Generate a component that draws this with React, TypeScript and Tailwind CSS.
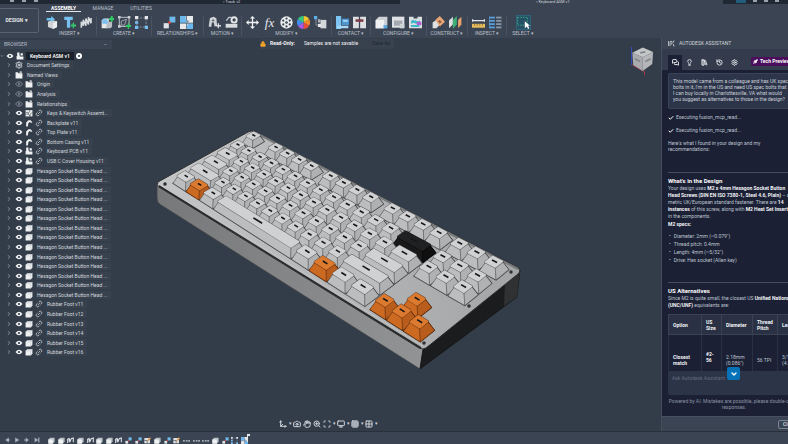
import React from "react";
import {
  ChevronRight,
  ChevronDown,
  Link2,
  Settings,
  Check,
  Lock,
  MessagesSquare,
  Lightbulb,
  LibraryBig,
  History,
  Rocket,
  Move3d,
  Camera,
  Hand,
  ZoomIn,
  Scan,
  Monitor,
  Grid3x3,
  Grid2x2,
} from "lucide-react";

/* ---------- toolbar ---------- */

const icons: Record<string, React.ReactNode> = {
  insert: (
    <>
      <path d="M3 9l6-3 8 2v9l-6 3-8-3z" fill="#cfd3d6" />
      <path d="M11 11l6-3v9l-6 3z" fill="#eceeef" />
      <path d="M1 3h7V0l6 5-6 4V7H1z" fill="#6cc0ef" />
    </>
  ),
  bolt: (
    <>
      <path d="M2 1h13v5h-4v12H6V6H2z" fill="#76bfee" />
      <path d="M12 13h3v-3h2v3h3v3h-3v3h-2v-3h-3z" fill="#35c86a" />
    </>
  ),
  spring: <path d="M2 18V9l3 6V6l4 9V4l4 9V2l4 9V3" fill="none" stroke="#d9dcdf" strokeWidth="2.4" />,
  component: (
    <>
      <path d="M1 7l3-3h8v12l-2 3H1z" fill="#e5e7e9" />
      <path d="M9 9h8v7l-2 3H8z" fill="#b9bec4" />
      <path d="M2 5h8v7H2z" fill="#7abff0" />
      <path d="M12 3h3V0h3v3h3v3h-3v3h-3V6h-3z" fill="#30c964" />
    </>
  ),
  sketch: (
    <>
      <path d="M2 2h15v14H2z" fill="none" stroke="#c9cdd2" strokeWidth="1.4" />
      <path d="M5 14V8l8-3-3 9z" fill="none" stroke="#aab0b8" strokeWidth="1.4" />
      <path d="M0 0h4v4H0zM15 0h4v4h-4zM0 14h4v4H0z" fill="#c9cdd2" />
      <path d="M12 14h3v-3h2v3h3v3h-3v3h-2v-3h-3z" fill="#30c964" />
    </>
  ),
  pattern: (
    <>
      <path d="M3 3h14v14H3z" fill="none" stroke="#9aa3ae" strokeWidth="1.2" strokeDasharray="3 2" />
      <path d="M0 0h5v5H0zM15 0h5v5h-5z" fill="#e4e6e8" />
      <path d="M0 8h5v4H0zM0 15h5v5H0zM15 15h5v5h-5z" fill="#76bfee" />
    </>
  ),
  joint: (
    <>
      <path d="M10 1h9v9h-9z" fill="#6fb9ea" />
      <path d="M1 11h8v8H1z" fill="#dfe1e4" />
      <circle cx="10" cy="10" r="2" fill="#e0483e" />
    </>
  ),
  puzzle: (
    <>
      <path d="M0 0h20v20H0z" fill="#e6e8ea" />
      <path d="M0 0h9v6l3 2-3 3H0zM11 11h9v9h-9l-1-4 2-2z" fill="#6cb8ec" />
      <path d="M10 0v7l3 1-3 3v9M0 11h20" fill="none" stroke="#3b4453" />
    </>
  ),
  motion: (
    <>
      <path d="M1 16l2-13 6-2 4 3 1 11-4 1-1-6H6l-1 7z" fill="#cfd3d6" />
      <path d="M6 6l3-1 1 3H6z" fill="#5b6472" />
      <path d="M12 15h8M16 11v8" stroke="#d9dcdf" strokeWidth="2" />
    </>
  ),
  motionLink: (
    <>
      <circle cx="14" cy="6" r="4" fill="none" stroke="#e4e6e8" strokeWidth="3" />
      <path d="M1 12h18v6H1z" fill="#d9dcdf" />
      <path d="M2 7l4-5h4" fill="none" stroke="#c4c9cf" strokeWidth="2" />
    </>
  ),
  move: (
    <path
      d="M10 0l4 4h-3v5h5V6l4 4-4 4v-3h-5v5h3l-4 4-4-4h3v-5H4v3l-4-4 4-4v3h5V4H6z"
      fill="#f0f1f2"
    />
  ),
  ball: (
    <>
      <circle cx="10" cy="10" r="9.5" fill="#eceeef" />
      <g fill="#3b4453">
        <circle cx="10" cy="10" r="2" />
        <circle cx="10" cy="4" r="1.7" />
        <circle cx="10" cy="16" r="1.7" />
        <circle cx="5" cy="7" r="1.7" />
        <circle cx="15" cy="7" r="1.7" />
        <circle cx="5" cy="13" r="1.7" />
        <circle cx="15" cy="13" r="1.7" />
      </g>
    </>
  ),
  colors: (
    <>
      <path d="M10 10V0A10 10 0 0 1 18.700 5z" fill="#f0c52e" />
      <path d="M10 10l8.700-5A10 10 0 0 1 18.700 15z" fill="#f28a2c" />
      <path d="M10 10l8.700 5A10 10 0 0 1 10 20z" fill="#ea4c3c" />
      <path d="M10 10v10A10 10 0 0 1 1.300 15z" fill="#a45be0" />
      <path d="M10 10L1.300 15A10 10 0 0 1 1.300 5z" fill="#3e8ef0" />
      <path d="M10 10L1.300 5A10 10 0 0 1 10 0z" fill="#35c87d" />
    </>
  ),
  derive: (
    <>
      <path d="M10 6h9v13h-9z" fill="#d5d8db" />
      <path d="M6 5h4v5H6z" fill="#aeb4bb" />
      <path d="M3 4v10h6" fill="none" stroke="#aeb4bb" />
      <path d="M0 0h5v5H0z" fill="#5db1ea" />
      <path d="M6 12h5v5H6z" fill="#e4e6e8" />
    </>
  ),
  contact: (
    <>
      <path d="M0 0h8v20H0z" fill="#7cc4f2" />
      <path d="M9 4h11v10H9z" fill="#4e96cf" />
      <path d="M11 6h7v3h-7zM2 15h17v4H2z" fill="#a8d9f8" />
    </>
  ),
  contactSet: (
    <>
      <path d="M0 1h9v18H0zM11 1h9v18h-9z" fill="#dddfe1" />
      <path d="M4 5h12v4H4z" fill="#7b3e48" />
    </>
  ),
  box: (
    <>
      <path d="M1 6l5-5h13v12l-5 6H1z" fill="#cdd1d5" />
      <path d="M1 6h13v13H1z" fill="#eff0f1" />
      <path d="M13 14h6v5h-6z" fill="#5da8dc" />
    </>
  ),
  body: (
    <>
      <path d="M1 7l5-5h13v11l-5 6H1z" fill="#b9bfc6" />
      <path d="M1 7h13v12H1z" fill="#eff0f1" />
    </>
  ),
  table: (
    <>
      <path d="M0 1h19v17H0z" fill="#dfe1e4" />
      <path d="M3 7h13v8H3z" fill="#a2a9b1" />
      <path d="M12 12h7v7h-7z" fill="#cfd3d6" />
    </>
  ),
  configPart: (
    <>
      <path d="M0 1h7v3h6V1h7v18H0z" fill="#dcdfe2" />
      <path d="M3 8c6-5 8 3 14-1v4c-6 4-8-3-14 1zM3 14h13v3H3z" fill="#3fb9c9" />
      <path d="M12 9h7v5h-7z" fill="#b05fd0" />
    </>
  ),
  plane: (
    <>
      <path d="M1 10l7-5 5 7-6 7H1z" fill="#dddfe1" />
      <path d="M5 6l7-6 8 9-8 7z" fill="#e9a777" />
      <path d="M9 8l3-2 3 3-3 3z" fill="#8d5f43" />
    </>
  ),
  midplane: (
    <>
      <path d="M0 7l6-6v12l-6 6z" fill="#dddfe1" />
      <path d="M6 6l6-6v13l-6 7z" fill="#3fae74" />
      <path d="M14 6l5-5v12l-5 6z" fill="#eaa56f" />
    </>
  ),
  measure: (
    <>
      <path d="M1 5v4M19 5v4M1 7h18" fill="none" stroke="#e4e6e8" strokeWidth="2" />
      <path d="M0 12h20v6H0z" fill="#e8bd5b" />
      <path d="M4 12v3M8 12v3M12 12v3M16 12v3" stroke="#6c5a2c" />
    </>
  ),
  interference: (
    <>
      <path d="M0 1h9v18H0z" fill="#5f9ed4" />
      <path d="M11 1h8v18h-8z" fill="#8d98a6" />
      <path d="M1 5h18M1 10h18M1 15h18" stroke="#36465a" strokeWidth="2" />
    </>
  ),
  select: (
    <>
      <path d="M1 2h15v12H1z" fill="none" stroke="#3db58a" strokeWidth="1.5" strokeDasharray="2 2" />
      <path d="M12 8v11l3-3 2 4 2-1-2-4h3z" fill="#fff" />
    </>
  ),
};

const groups = [
  { label: "INSERT", width: "w-[54px]", items: ["insert", "bolt", "spring"] },
  { label: "CREATE", width: "w-[55px]", items: ["component", "sketch", "pattern"] },
  { label: "RELATIONSHIPS", width: "w-[52px]", items: ["joint", "puzzle"] },
  { label: "MOTION", width: "w-[38px]", items: ["motion", "motionLink"] },
  { label: "MODIFY", width: "w-[90px]", items: ["move", "fx", "ball", "colors", "derive"] },
  { label: "CONTACT", width: "w-[39px]", items: ["contact", "contactSet"] },
  { label: "CONFIGURE", width: "w-[56px]", items: ["box", "table", "configPart"] },
  { label: "CONSTRUCT", width: "w-[41px]", items: ["plane", "midplane"] },
  { label: "INSPECT", width: "w-[39px]", items: ["measure", "interference"] },
  { label: "SELECT", width: "w-[32px]", items: ["select"] },
];

function ToolIcon({ name }: { name: string }) {
  if (name === "fx") {
    return (
      <span className="w-[13px] text-center font-['Liberation_Serif',serif] text-[13px] leading-[13px] italic text-gray-200">
        fx
      </span>
    );
  }
  return (
    <svg viewBox="0 0 20 20" className="size-[13px]">
      {icons[name]}
    </svg>
  );
}

function TopBar() {
  return (
    <header className="shrink-0">
      <div className="flex h-1 justify-between bg-[#202834] text-[4px] leading-[4px] text-gray-300">
        <div className="flex flex-1 items-start">
          <span className="ml-[10px] flex w-[213px] gap-2">
            <i className="h-[2px] w-1 bg-gray-400" />
            <i className="h-[2px] w-1 bg-gray-400" />
            <i className="h-[2px] w-1 bg-gray-400" />
          </span>
          <span>▫ Track v2</span>
        </div>
        <div className="flex w-[388px] justify-between bg-[#3b4453]">
          <span className="ml-[136px]">▫ Keyboard ASM v1</span>
          <span className="flex w-[65px] gap-[7px] bg-[#202834] pl-[13px]">
            <i className="h-[3px] w-[10px] bg-[#215c7d]" />
            <i className="h-[2px] w-1 bg-gray-400" />
            <i className="h-[2px] w-1 bg-gray-400" />
            <i className="h-[2px] w-1 bg-gray-400" />
          </span>
        </div>
      </div>
      <div className="flex h-[34px] bg-[#3b4453]">
        <button className="-ml-px mt-1 h-[25px] w-10 shrink-0 rounded-xs border border-[#596271] pr-1 text-[5px] font-bold text-gray-200">
          DESIGN <span className="ml-px">▾</span>
        </button>
        <div className="ml-1 flex flex-col">
          <nav className="flex h-2 text-[5px] leading-[8px] text-[#b9c0c9]">
            <button className="ml-[3px] w-[35px] border-b border-gray-200 font-bold text-white">ASSEMBLY</button>
            <button className="ml-2 w-7">MANAGE</button>
            <button className="ml-2 w-8">UTILITIES</button>
          </nav>
          <div className="flex pt-1">
            {groups.map((group) => (
              <div key={group.label} className={`flex flex-col items-center ${group.width} border-r border-[#4a5362] last:border-0`}>
                <div className={`flex gap-1 ${group.label === "SELECT" ? "bg-[#265064] outline outline-[#2d6478]" : ""}`}>
                  {group.items.map((item) => (
                    <button key={item} aria-label={item} className="flex h-[13px] items-center">
                      <ToolIcon name={item} />
                    </button>
                  ))}
                </div>
                <button className="mt-px text-[5px] leading-[6px] whitespace-nowrap text-[#bcc2ca]">{group.label} ▾</button>
              </div>
            ))}
          </div>
        </div>
      </div>
    </header>
  );
}

/* ---------- browser tree ---------- */

type Node = { name: string; icon: string; linked?: boolean; hidden?: boolean };

const nodes: Node[] = [
  { name: "Origin", icon: "folder", hidden: true },
  { name: "Analysis", icon: "folder", hidden: true },
  { name: "Relationships", icon: "folder", hidden: true },
  { name: "Keys & Keyswitch Assemt...", icon: "config", linked: true },
  { name: "Backplate v11", icon: "sheet", linked: true },
  { name: "Top Plate v11", icon: "sheet", linked: true },
  { name: "Bottom Casing v11", icon: "sheet", linked: true },
  { name: "Keyboard PCB v11", icon: "assembly", linked: true },
  { name: "USB C Cover Housing v11", icon: "assembly", linked: true },
  ...Array.from({ length: 14 }, () => ({ name: "Hexagon Socket Button Head ...", icon: "body" })),
  ...[1, 2, 3, 4, 5, 6].map((n) => ({ name: `Rubber Foot v1${n}`, icon: "body", linked: true })),
];

function NodeIcon({ type }: { type: string }) {
  return (
    <svg viewBox="0 0 14 14" className="size-2 shrink-0" fill="#eef0f2">
      {type === "folder" && <path d="M1 2h4l1 2h7v9H1zM8 1h4v2H8z" />}
      {type === "body" && (
        <>
          <path d="M1 5l3-3h9v8l-3 3H1z" />
          <path d="M1 5h9v8M10 5l3-3" fill="none" stroke="#c2c7cd" />
        </>
      )}
      {type === "assembly" && <path d="M2 1h4v5h1v2h6v5H1V7h1zM8 2h4v4H8z" />}
      {type === "sheet" && <path d="M2 13V6l4-4h4l3 4-3 1-1-2-3 2-1 6z" />}
      {type === "config" && (
        <>
          <path d="M1 2h12v11H1z" />
          <path d="M1 6h5v3H1M8 2v4M6 9l3 4V9l4-3" fill="none" stroke="#333d49" />
        </>
      )}
    </svg>
  );
}

function EyeIcon({ hidden }: { hidden?: boolean }) {
  return (
    <svg viewBox="0 0 16 16" className="size-2 shrink-0">
      <path
        d="M1 8q7-9 14 0-7 9-14 0z"
        fill={hidden ? "none" : "#f0f2f4"}
        stroke={hidden ? "#7f8894" : "none"}
        strokeWidth="2"
      />
      <circle cx="8" cy="8" r="2.200" fill={hidden ? "#7f8894" : "#333d49"} />
    </svg>
  );
}

const nameClass = "ml-px bg-[#38424f] pl-px pr-1 whitespace-nowrap leading-[8px]";

function BrowserTree() {
  return (
    <aside className="w-[112px] shrink-0 pt-[2px] text-[5px] text-[#d3d7dc]">
      <div className="flex h-[9px] items-center justify-between bg-[#3b4453] px-1 text-[#b4bac3]">
        <span>BROWSER</span>
        <button aria-label="Collapse" className="px-px">–</button>
      </div>
      <ul className="mt-[2px] grid h-[306px] auto-rows-fr">
        <li className="flex items-center gap-[2px] text-white">
          <ChevronDown className="size-1" />
          <EyeIcon />
          <NodeIcon type="assembly" />
          <span className="bg-[#1c222b] px-1 leading-[8px] font-semibold whitespace-nowrap">Keyboard ASM v1</span>
          <input type="radio" name="active" aria-label="Active component" defaultChecked className="size-[6px] appearance-none rounded-full border-2 border-white bg-[#333d49]" />
        </li>
        <li className="flex items-center gap-[2px] pl-[5px]">
          <ChevronRight className="size-2 p-px" />
          <Settings className="size-2" strokeWidth={3} />
          <span className={nameClass}>Document Settings</span>
        </li>
        <li className="flex items-center gap-[2px] pl-[5px]">
          <ChevronRight className="size-2 p-px" />
          <NodeIcon type="folder" />
          <span className={nameClass}>Named Views</span>
        </li>
        {nodes.map((node, i) => (
          <li key={i} className="flex items-center gap-[2px] pl-[5px]">
            <button aria-label="Expand">
              <ChevronRight className="size-2 p-px" />
            </button>
            <button aria-label="Toggle visibility">
              <EyeIcon hidden={node.hidden} />
            </button>
            <NodeIcon type={node.icon} />
            {node.linked && <Link2 className="size-2 shrink-0 -rotate-45" strokeWidth={2} />}
            <span className={nameClass}>{node.name}</span>
          </li>
        ))}
      </ul>
    </aside>
  );
}

/* ---------- keyboard model ---------- */

type Key = { u: number; v: number; w: number; color?: "orange" | "black" };

// widths in key units, negative numbers are gaps
const rows: { v: number; widths: number[] }[] = [
  { v: 5.25, widths: [1, -1, 1, 1, 1, 1, -0.5, 1, 1, 1, 1, -0.5, 1, 1, 1, 1, -0.25, 1, 1, 1] },
  { v: 4, widths: [1, 1, 1, 1, 1, 1, 1, 1, 1, 1, 1, 1, 1, 2, -0.25, 1, 1, 1] },
  { v: 3, widths: [1.5, 1, 1, 1, 1, 1, 1, 1, 1, 1, 1, 1, 1, 1.5, -0.25, 1, 1, 1] },
  { v: 2, widths: [1.75, 1, 1, 1, 1, 1, 1, 1, 1, 1, 1, 1, 2.25] },
  { v: 1, widths: [2.25, 1, 1, 1, 1, 1, 1, 1, 1, 1, 1, 2.75, -1.25, 1] },
  { v: 0, widths: [1.25, 1.25, 1.25, 6.25, 1.25, 1.25, 1.25, 1.25, -0.25, 1, 1, 1] },
];

const keys: Key[] = rows.flatMap(({ v, widths }) => {
  let u = 0;
  const out: Key[] = [];
  widths.forEach((w) => {
    if (w > 0) {
      const arrow = v < 2 && u > 15;
      const orange = arrow || (v === 0 && (u === 1.25 || u === 11.25));
      out.push({ u, v, w, color: orange ? "orange" : v === 4 && w === 2 ? "black" : undefined });
    }
    u += Math.abs(w);
  });
  return out;
});

// perspective projection of a point on the key plane, z lifts it off the plate
function project(u: number, v: number, z = 0): [number, number] {
  const s = (u - 0.56) / 17.19;
  const t = v / 5.25;
  const w = 1 - 0.233 * s + 0.0478 * t;
  return [(185 + 136.4 * s + 81.1 * t) / w, (177 + 70.7 * s - 33.5 * t - z) / w];
}

const points = (list: [number, number][]) => list.map((p) => p.map((n) => n.toFixed(1)).join(",")).join(" ");

const palette = {
  plain: { top: "#d0d1d2", front: "#bcbdbe", side: "#b0b1b2", line: "#3c3d3e" },
  orange: { top: "#dc7a30", front: "#cc6a22", side: "#b95d1c", line: "#4b240c" },
  black: { top: "#202122", front: "#19191a", side: "#101011", line: "#060606" },
};

function KeyCap({ u, v, w, color }: Key) {
  const c = palette[color ?? "plain"];
  const a = 0.24;
  const b = 0.03;
  const top = [
    project(u + a, v - 0.5 + a, 1),
    project(u + w - a, v - 0.5 + a, 1),
    project(u + w - a, v + 0.5 - a, 1),
    project(u + a, v + 0.5 - a, 1),
  ];
  const base = [
    project(u + b, v - 0.5 + b, -6),
    project(u + w - b, v - 0.5 + b, -6),
    project(u + w - b, v + 0.5 - b, -6),
    project(u + b, v + 0.5 - b, -6),
  ];
  const mid = u + w / 2;
  const [x1, y1] = project(mid - 0.14 * w ** 0.5, v + 0.04, 1);
  const [x2, y2] = project(mid + 0.14 * w ** 0.5, v + 0.04, 1);
  return (
    <g stroke={c.line} strokeWidth="0.4" strokeLinejoin="round">
      <polygon points={points([base[0], base[1], base[2], top[2], top[3], base[3]])} fill={c.side} strokeWidth="1.1" />
      <polygon points={points([base[3], base[0], top[0], top[3]])} fill={c.front} />
      <polygon points={points([base[0], base[1], top[1], top[0]])} fill={c.front} />
      <polygon points={points([base[1], base[2], top[2], top[1]])} fill={c.side} />
      <polygon points={points(top)} fill={c.top} strokeWidth="2.8" strokeOpacity="0.7" />
      <polygon points={points(top)} fill={c.top} stroke={c.top} strokeWidth="1.8" />
      <line x1={x1} y1={y1} x2={x2} y2={y2} stroke="#161616" strokeWidth="1.6" />
    </g>
  );
}

function KeyboardModel() {
  return (
    <svg viewBox="150 125 380 250" className="w-[380px]" role="img" aria-label="Keyboard assembly">
      <defs>
        <linearGradient id="front" x1="0" y1="0" x2="1" y2="0">
          <stop offset="0" stopColor="#777879" />
          <stop offset="1" stopColor="#929394" />
        </linearGradient>
        <linearGradient id="plate" x1="0" y1="0" x2="1" y2="0">
          <stop offset="0" stopColor="#c4c5c6" />
          <stop offset="1" stopColor="#a3a5a6" />
        </linearGradient>
      </defs>
      <path d="M157 185L423 349L420 369L161 205Q157 203 157 198z" fill="url(#front)" stroke="#3f4042" strokeWidth="0.7" />
      <path d="M423 350L520 270L517 297L420 369z" fill="#1b1c1d" stroke="#111" strokeWidth="0.7" />
      <path d="M505 283L520 270L517 297L504 306z" fill="#303133" />
      <path d="M158 182L248 132Q251 130 255 132L517 267Q522 270 518 274L426 348Q423 350 419 348L159 187Q156 185 158 182z" fill="url(#plate)" stroke="#2c2d2e" strokeWidth="1" />
      <path d="M159 186L421 348" stroke="#252627" strokeWidth="1.5" />
      <path d="M160 184L423 346" stroke="#c3c4c4" strokeWidth="1" />
      <path d="M256 133L518 269" stroke="#77797b" strokeWidth="2" />
      {[[165, 184], [511, 272], [469, 306], [424, 343]].map(([x, y]) => (
        <circle key={x} cx={x} cy={y} r="1.500" fill="#1d1d1e" stroke="#606162" />
      ))}
      {keys.map((key, i) => (
        <KeyCap key={i} {...key} />
      ))}
    </svg>
  );
}

function ViewCube() {
  return (
    <svg viewBox="0 0 30 36" className="absolute top-[7px] right-[7px] w-[26px]" role="img" aria-label="View cube">
      <path d="M4 2v21" stroke="#3c4bd0" />
      <path d="M5 23l14 8v4" fill="none" stroke="#b83a48" />
      <path d="M17 3l12 5-12 6L5 9z" fill="#c4c6c8" />
      <path d="M5 9l12 5v16L6 23z" fill="#a9abae" />
      <path d="M17 14l12-6-1 14-11 8z" fill="#b4b6b9" />
      <path d="M14 9l6-1M8 16l6 3M20 19l6-3" stroke="#84878c" strokeWidth="2" />
    </svg>
  );
}

function Viewport() {
  const nav = [Move3d, Camera, Hand, ZoomIn, Scan, Monitor, Grid3x3, Grid2x2];
  return (
    <main className="relative flex min-w-0 flex-1 overflow-hidden bg-[#333d49]">
      <BrowserTree />
      <div className="flex min-w-0 flex-1 flex-col">
        <div className="mt-px ml-[148px] flex h-[10px] w-[134px] items-center bg-[#38414e] text-[5px] whitespace-nowrap text-gray-100">
          <Lock className="size-[6px] fill-[#f0a52c] text-[#f0a52c]" />
          <strong className="ml-1">Read-Only:</strong>
          <span className="ml-[9px]">Samples are not savable</span>
          <button disabled className="ml-auto pr-1 text-[#1e2630]">Save As</button>
        </div>
        <div className="mt-[76px] ml-[38px]">
          <KeyboardModel />
        </div>
        <div className="mt-auto mb-[3px] ml-[166px] flex items-center text-[5px] text-gray-300">
          {nav.map((Icon, i) => (
            <button key={i} aria-label={`Navigation ${i + 1}`} className="flex items-center">
              <Icon className="mx-px size-[8px]" strokeWidth={3} />
              {i !== 1 && i !== 2 && i !== 3 ? <span className="w-1">▾</span> : null}
            </button>
          ))}
        </div>
      </div>
      <ViewCube />
    </main>
  );
}

/* ---------- assistant ---------- */

function Assistant() {
  const tabs = [Lightbulb, LibraryBig, History, Settings];
  return (
    <section className="flex w-[127px] shrink-0 flex-col overflow-hidden border-l border-[#444d5c] bg-[#1b2035] text-[5px] whitespace-nowrap text-[#bfc5cf]">
      <div className="flex h-[11px] shrink-0 items-center gap-1 bg-[#3b4453] pl-[6px] text-[#d3d7dc]">
        <svg viewBox="0 0 14 14" className="size-[7px]" fill="none" stroke="currentColor" strokeWidth="1.500">
          <path d="M1 2v10M4 12V3h4v5H5M13 2h-2v3M11 8v4h2" />
        </svg>
        <h2>AUTODESK ASSISTANT</h2>
      </div>
      <div className="flex h-[21px] shrink-0 items-end bg-[#343b4c] pl-[6px]">
        <button aria-label="Chat" className="flex h-[15px] w-[14px] shrink-0 items-center justify-center bg-[#1b2035] text-white">
          <MessagesSquare className="size-[7px]" strokeWidth={3} />
        </button>
        {tabs.map((Icon, i) => (
          <button key={i} aria-label={`Tab ${i + 1}`} className="flex h-[15px] w-[15px] shrink-0 items-center justify-center text-gray-200">
            <Icon className="size-[7px]" strokeWidth={3} />
          </button>
        ))}
        <span className="mb-1 ml-[9px] flex h-[9px] shrink-0 items-center gap-[2px] rounded-xs bg-[#4b0d5c] px-[2px] font-bold text-white">
          <Rocket className="size-[5px] fill-white" />
          Tech Preview
        </span>
      </div>
      <div className="ml-[6px] flex min-h-0 w-[132px] flex-1 flex-col">
        <p className="mt-[3px] rounded-xs border border-[#3a4359] bg-[#2c354a] px-1 pt-1 pb-[6px] leading-[6px] text-[#cdd2d9]">
          This model came from a colleague and has UK spec<br />
          bolts in it, I'm in the US and need US spec bolts that<br />
          I can buy locally in Charlottesville, VA what would<br />
          you suggest as alternatives to those in the design?
        </p>
        {[0, 1].map((i) => (
          <p key={i} className="mt-[5px] flex h-2 items-center gap-[2px]">
            <Check className="size-[6px] text-white" strokeWidth={4} />
            Executing fusion_mcp_read...
          </p>
        ))}
        <p className="mt-[5px] leading-[6px]">
          Here's what I found in your design and my<br />
          recommendations:
        </p>
        <hr className="mt-5 w-full shrink-0 border-[#454c5e]" />
        <h3 className="mt-1 text-[6px] leading-[8px] font-bold text-white">What's in the Design</h3>
        <p className="leading-[7px] [&>b]:text-gray-100">
          Your design uses <b>M2 x 4mm Hexagon Socket Button</b><br />
          <b>Head Screws (DIN EN ISO 7380-1, Steel 4.6, Plain)</b> – a<br />
          metric UK/European standard fastener. There are <b>14</b><br />
          <b>instances</b> of this screw, along with <b>M2 Heat Set Inserts</b><br />
          in the components.
        </p>
        <p className="mt-px leading-[7px] font-bold text-gray-100">M2 specs:</p>
        <ul className="mt-1 ml-px leading-[8px] [&>li]:flex [&>li]:gap-[3px] [&>li]:before:content-['•']">
          <li>Diameter: 2mm (~0.079")</li>
          <li>Thread pitch: 0.4mm</li>
          <li>Length: 4mm (~5/32")</li>
          <li>Drive: Hex socket (Allen key)</li>
        </ul>
        <hr className="mt-[18px] w-full shrink-0 border-[#454c5e]" />
        <h3 className="mt-1 text-[6px] leading-[8px] font-bold text-white">US Alternatives</h3>
        <p className="leading-[7px] [&>b]:text-gray-100">
          Since M2 is quite small, the closest US <b>Unified National</b><br />
          <b>(UNC/UNF)</b> equivalents are:
        </p>
        <div className="relative mt-[5px] flex flex-col">
          <table className="w-[150px] table-fixed border-collapse text-left leading-[6px] [&_td]:border-l [&_td]:border-[#2a3145] [&_td]:px-1 [&_th]:border [&_th]:border-[#3a4254] [&_th]:px-1">
            <thead className="h-5 bg-[#2a3144] text-gray-100">
              <tr>
                <th className="w-[33px]">Option</th>
                <th className="w-5">US<br />Size</th>
                <th className="w-[31px]">Diameter</th>
                <th className="w-[25px]">Thread<br />Pitch</th>
                <th>Length</th>
              </tr>
            </thead>
            <tbody className="align-bottom">
              <tr className="h-[36px]">
                <td className="pb-[5px] font-bold text-gray-100">Closest<br />match</td>
                <td className="pb-2 font-bold text-gray-100">#2-<br />56</td>
                <td className="pb-[5px]">2.18mm<br />(0.086")</td>
                <td className="pb-2">56 TPI</td>
                <td className="pb-[5px]">3/16"<br />(4.8mm)</td>
              </tr>
            </tbody>
          </table>
          <button aria-label="Scroll to bottom" className="absolute top-[53px] left-[59px] flex size-[13px] items-center justify-center rounded-xs bg-[#0673b8] text-white">
            <ChevronDown className="size-2" strokeWidth={4} />
          </button>
        </div>
        <textarea aria-label="Message" placeholder="Ask Autodesk Assistant" className="h-[24px] shrink-0 resize-none rounded-xs bg-[#2c3448] px-1 py-1 leading-[6px] placeholder:text-[#626b7d]" />
        <p className="mt-[3px] text-center leading-[6px] text-[#8b93a3]">
          Powered by AI. Mistakes are possible, please double-check<br />
          responses.
        </p>
      </div>
      <div className="flex h-[15px] shrink-0 items-center border-t border-[#465062] bg-[#3b4453]">
        <button className="ml-[116px] h-[9px] shrink-0 rounded-xs border border-[#7b8492] px-1 leading-[7px] text-white">Close</button>
      </div>
    </section>
  );
}

/* ---------- timeline ---------- */

const timeline = "body body sheet body sheet body body sheet joint joint edit body joint edit dots dots dots body joint pattern puzzle".split(" ");

function Timeline() {
  return (
    <footer className="flex h-[13px] shrink-0 items-center overflow-hidden border-t border-[#28303b] bg-[#3b4453] pt-1">
      <div className="flex w-[48px] gap-[2px] pl-[3px] text-[#a7aeb8]">
        {["M8 1v8L2 5z M8 4h2v2H8z", "M2 1v8l7-4z", "M3 1v8l5-4z M0 4h3v2H0z", "M1 1v8l6-4z M7 1h2v8H7z"].map((d) => (
          <button key={d} aria-label="Playback">
            <svg viewBox="0 0 10 10" className="size-2 p-px" fill="currentColor">
              <path d={d} />
            </svg>
          </button>
        ))}
      </div>
      <div className="flex w-[200px] justify-between">
        {timeline.map((type, i) => (
          <svg key={i} viewBox="0 0 20 20" className="size-[7px]">
            {type === "sheet" && <path d="M1 17V7l5-3 3 8 3-7 6-2v12M6 4v12" fill="none" stroke="#e3e5e8" strokeWidth="3" />}
            {type === "edit" && (
              <>
                <path d="M1 3h16v15H1z" fill="#e3e5e8" />
                <path d="M9 10l8-9 3 3-8 8z" fill="#e39a4a" />
                <path d="M1 10h8v8" fill="none" stroke="#4a5362" strokeWidth="2" />
              </>
            )}
            {type === "dots" && <path d="M0 9h5v4H0zM8 9h5v4H8zM15 9h5v4h-5z" fill="#cdd1d6" />}
            {icons[type]}
          </svg>
        ))}
      </div>
      <i className="-ml-px mb-1 h-2 w-[3px] border-t-2 border-l border-gray-200" />
    </footer>
  );
}

export default function App() {
  return (
    <div className="flex h-screen flex-col overflow-hidden bg-[#333d49] font-[Roboto,sans-serif]">
      <TopBar />
      <div className="flex min-h-0 flex-1">
        <Viewport />
        <Assistant />
      </div>
      <Timeline />
    </div>
  );
}
